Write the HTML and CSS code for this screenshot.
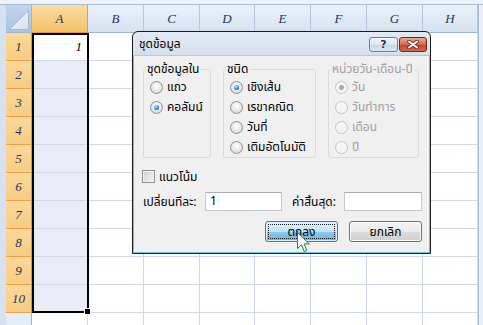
FILE: index.html
```html
<!DOCTYPE html>
<html lang="th">
<head>
    <meta charset="UTF-8">
    <title>ชุดข้อมูล</title>
    <link rel="stylesheet" href="styles.css">
</head>
<body>
    <div class="topbar"></div>
    <div class="workspace">
        <div class="edge-left"></div>
        <div class="sheet">
            <div class="corner">
                <svg width="26" height="28" viewBox="0 0 26 28">
                    <defs>
                        <linearGradient id="tri" x1="0" y1="0" x2="1" y2="1">
                            <stop offset="0" stop-color="#f7f9fc"/>
                            <stop offset="1" stop-color="#d6e0ee"/>
                        </linearGradient>
                    </defs>
                    <polygon points="3.5,24.5 22.5,5.5 22.5,24.5" fill="url(#tri)" stroke="#a7b9d0"/>
                </svg>
            </div>
            <div class="ch on">A</div><div class="ch">B</div><div class="ch">C</div><div class="ch">D</div><div class="ch">E</div><div class="ch">F</div><div class="ch">G</div><div class="ch">H</div>

            <div class="rh on">1</div><div class="c num">1</div><div class="c"></div><div class="c"></div><div class="c"></div><div class="c"></div><div class="c"></div><div class="c"></div><div class="c"></div>
            <div class="rh on">2</div><div class="c sel"></div><div class="c"></div><div class="c"></div><div class="c"></div><div class="c"></div><div class="c"></div><div class="c"></div><div class="c"></div>
            <div class="rh on">3</div><div class="c sel"></div><div class="c"></div><div class="c"></div><div class="c"></div><div class="c"></div><div class="c"></div><div class="c"></div><div class="c"></div>
            <div class="rh on">4</div><div class="c sel"></div><div class="c"></div><div class="c"></div><div class="c"></div><div class="c"></div><div class="c"></div><div class="c"></div><div class="c"></div>
            <div class="rh on">5</div><div class="c sel"></div><div class="c"></div><div class="c"></div><div class="c"></div><div class="c"></div><div class="c"></div><div class="c"></div><div class="c"></div>
            <div class="rh on">6</div><div class="c sel"></div><div class="c"></div><div class="c"></div><div class="c"></div><div class="c"></div><div class="c"></div><div class="c"></div><div class="c"></div>
            <div class="rh on">7</div><div class="c sel"></div><div class="c"></div><div class="c"></div><div class="c"></div><div class="c"></div><div class="c"></div><div class="c"></div><div class="c"></div>
            <div class="rh on">8</div><div class="c sel"></div><div class="c"></div><div class="c"></div><div class="c"></div><div class="c"></div><div class="c"></div><div class="c"></div><div class="c"></div>
            <div class="rh on">9</div><div class="c sel"></div><div class="c"></div><div class="c"></div><div class="c"></div><div class="c"></div><div class="c"></div><div class="c"></div><div class="c"></div>
            <div class="rh on">10</div><div class="c sel"></div><div class="c"></div><div class="c"></div><div class="c"></div><div class="c"></div><div class="c"></div><div class="c"></div><div class="c"></div>
            <div class="rh last">11</div><div class="c"></div><div class="c"></div><div class="c"></div><div class="c"></div><div class="c"></div><div class="c"></div><div class="c"></div><div class="c"></div>
        </div>
        <div class="edge-right"></div>
    </div>

    <!-- selected range A1:A10 -->
    <div class="selection"></div>

    <div class="dialog">
        <div class="titlebar">
            <span class="title">ชุดข้อมูล</span>
            <div class="caption">
                <span class="cap-help">?</span>
                <span class="cap-close">
                    <svg width="12" height="9" viewBox="0 0 12 9">
                        <path d="M2 1.5 L10 7.5 M10 1.5 L2 7.5" stroke="#6b2a1c" stroke-width="3.6" stroke-linecap="round"/>
                        <path d="M2 1.5 L10 7.5 M10 1.5 L2 7.5" stroke="#ffffff" stroke-width="2" stroke-linecap="round"/>
                    </svg>
                </span>
            </div>
        </div>
        <div class="client">
            <div class="groups">
                <fieldset class="group g1">
                    <legend>ชุดข้อมูลใน</legend>
                    <div class="opt"><span class="radio"></span>แถว</div>
                    <div class="opt"><span class="radio on"></span>คอลัมน์</div>
                </fieldset>
                <fieldset class="group g2">
                    <legend>ชนิด</legend>
                    <div class="opt"><span class="radio on"></span>เชิงเส้น</div>
                    <div class="opt"><span class="radio"></span>เรขาคณิต</div>
                    <div class="opt"><span class="radio"></span>วันที่</div>
                    <div class="opt"><span class="radio"></span>เติมอัตโนมัติ</div>
                </fieldset>
                <fieldset class="group g3 disabled">
                    <legend>หน่วยวัน-เดือน-ปี</legend>
                    <div class="opt"><span class="radio on"></span>วัน</div>
                    <div class="opt"><span class="radio"></span>วันทำการ</div>
                    <div class="opt"><span class="radio"></span>เดือน</div>
                    <div class="opt"><span class="radio"></span>ปี</div>
                </fieldset>
            </div>

            <div class="check-row"><span class="check"></span>แนวโน้ม</div>

            <div class="step-row">
                <span class="step-label">เปลี่ยนทีละ:</span>
                <span class="field">1</span>
                <span class="step-label end">ค่าสิ้นสุด:</span>
                <span class="field wide"></span>
            </div>

            <div class="buttons">
                <span class="btn default"><span class="focus">ตกลง</span></span>
                <span class="btn">ยกเลิก</span>
            </div>
        </div>
    </div>

    <svg class="pointer" width="13" height="21" viewBox="0 0 13 21">
        <path d="M0.5 0.5 L0.5 16.5 L4.5 12.8 L7.3 19.6 L9.8 18.5 L7.1 11.9 L12.2 11.9 Z" fill="#ffffff" stroke="#1f8a2f" stroke-width="1" stroke-linejoin="round"/>
    </svg>
</body>
</html>
```

FILE: styles.css
```css
body {
    margin: 0;
    width: 483px;
    height: 325px;
    overflow: hidden;
    position: relative;
    background-color: #e4ecf6;
    font-family: Tahoma, "Noto Sans Thai", "Noto Sans", "DejaVu Sans", sans-serif;
    font-size: 12px;
    color: #000;
}

.topbar {
    height: 4px;
    background-color: #eef3fa;
    border-bottom: 1px solid #a3bbd7;
}

.workspace {
    display: flex;
}

.edge-left {
    width: 6px;
    background-color: #d6e2f1;
}

.edge-right {
    flex: 1;
    background-color: #e9eef6;
    border-left: 1px solid #a9bdd6;
}

/* sheet grid: row header + columns A..H */
.sheet {
    display: grid;
    grid-template-columns: 26px 56px 56px 56px 55px 56px 56px 56px 55px;
    grid-auto-rows: 28px;
}

.corner {
    background: linear-gradient(#c3d5ec, #aac3e3);
    border-right: 1px solid #9eb6ce;
    border-bottom: 1px solid #9eb6ce;
    box-sizing: border-box;
}

.corner svg {
    display: block;
}

.ch,
.rh {
    box-sizing: border-box;
    font-family: "Liberation Serif", serif;
    font-style: italic;
    font-size: 13px;
    color: #22375a;
    text-align: center;
    line-height: 27px;
}

.ch {
    background: linear-gradient(#eaf1fa, #d6e2f1);
    border-right: 1px solid #b4c7dd;
    border-bottom: 1px solid #9eb6ce;
}

.ch.on {
    background: linear-gradient(#fbdca3, #f3c266);
    border-right-color: #d9a448;
    border-bottom-color: #e29a3c;
}

.rh {
    background: linear-gradient(#e8eff8, #dbe5f2);
    border-right: 1px solid #9eb6ce;
    border-bottom: 1px solid #b4c7dd;
}

.rh.last {
    line-height: 22px;
    padding-top: 6px;
}

.rh.on {
    background: linear-gradient(#fbd89a, #f8cc82);
    border-right-color: #e29336;
    border-bottom-color: #efa04a;
}

.c {
    box-sizing: border-box;
    background-color: #fff;
    border-right: 1px solid #d0d7e5;
    border-bottom: 1px solid #d0d7e5;
}

.c.sel {
    background-color: #e9ecf6;
}

.c.num {
    font-family: "Liberation Serif", serif;
    font-style: italic;
    font-size: 13px;
    text-align: right;
    padding-right: 5px;
    line-height: 27px;
}

.selection {
    position: absolute;
    left: 32px;
    top: 33px;
    width: 57px;
    height: 280px;
    box-sizing: border-box;
    border: 2px solid #000;
}

.selection::after {
    content: '';
    position: absolute;
    right: -4px;
    bottom: -4px;
    width: 5px;
    height: 5px;
    background-color: #000;
    border: 1px solid #fff;
}

/* dialog window */
.dialog {
    position: absolute;
    left: 132px;
    top: 31px;
    width: 299px;
    height: 223px;
    box-sizing: border-box;
    border: 1px solid #1b1b1b;
    border-radius: 6px 6px 0 0;
    background: linear-gradient(#e2eaf4, #d5dfec 24px);
    display: flex;
    flex-direction: column;
}

.titlebar {
    height: 23px;
    display: flex;
    align-items: center;
    padding: 0 3px 0 6px;
}

.caption {
    margin-left: auto;
    display: flex;
    gap: 1px;
    align-self: flex-start;
    margin-top: 5px;
}

.cap-help,
.cap-close {
    height: 15px;
    box-sizing: border-box;
    border-radius: 3px;
    display: flex;
    align-items: center;
    justify-content: center;
}

.cap-help {
    width: 29px;
    border: 1px solid #6f8097;
    background: linear-gradient(#f2f6fb, #dbe5f1 50%, #c6d5e8 50%, #d9e5f3);
    font-family: "DejaVu Sans", sans-serif;
    font-weight: bold;
    font-size: 11px;
    color: #23344f;
    text-shadow: 0 0 2px #fff;
}

.cap-close {
    width: 28px;
    border: 1px solid #6d2b1e;
    background: linear-gradient(#eaa997, #d7664e 50%, #c5402a 50%, #d36a50);
}

.client {
    flex: 1;
    background-color: #f0f0f0;
    border: 1px solid #5ec7ee;
    border-top-color: #b7c8dc;
    padding: 5px 7px 0 9px;
}

.groups {
    display: flex;
    gap: 12px;
}

.group {
    margin: 0;
    padding: 0 0 0 6px;
    height: 97px;
    box-sizing: border-box;
    border: 1px solid #d3dce4;
    border-radius: 3px;
}

.group legend {
    padding: 0 2px;
    margin-left: -5px;
    line-height: 16px;
}

.g1 {
    width: 68px;
}

.g2 {
    width: 93px;
}

.g3 {
    width: 91px;
}

.opt {
    display: flex;
    align-items: center;
    gap: 4px;
    height: 20px;
    white-space: nowrap;
}

.radio {
    width: 13px;
    height: 13px;
    flex: none;
    box-sizing: border-box;
    border-radius: 50%;
    border: 1px solid #8e9194;
    background: radial-gradient(circle at 50% 40%, #ffffff 0, #eeeeee 40%, #cdcdcd 100%);
    display: grid;
    place-items: center;
}

.radio.on::after {
    content: '';
    width: 5px;
    height: 5px;
    border-radius: 50%;
    background: radial-gradient(circle at 40% 35%, #c6ecff, #2a7bd0 60%, #14498c);
}

.disabled {
    color: #a0a0a0;
}

.disabled .radio {
    border-color: #c4c4c4;
    background: #f4f4f4;
}

.disabled .radio.on::after {
    background: #a9a9a9;
}

.check-row {
    display: flex;
    align-items: center;
    gap: 4px;
    margin-top: 12px;
    margin-left: -1px;
    height: 13px;
}

.check {
    width: 13px;
    height: 13px;
    box-sizing: border-box;
    border: 1px solid #8f8f8f;
    background: linear-gradient(135deg, #cdcdcd, #f6f6f6);
    box-shadow: inset 0 0 0 1px #f2f2f2;
}

.step-row {
    display: flex;
    align-items: center;
    margin-top: 9px;
}

.step-label {
    width: 62px;
    white-space: nowrap;
}

.step-label.end {
    margin-left: 10px;
    width: 52px;
}

.field {
    box-sizing: border-box;
    width: 77px;
    height: 19px;
    background-color: #fff;
    border: 1px solid #c5c8cd;
    border-top-color: #a9acb2;
    padding-left: 4px;
    line-height: 17px;
}

.field.wide {
    width: 78px;
}

.buttons {
    display: flex;
    justify-content: flex-end;
    gap: 11px;
    margin-top: 10px;
}

.btn {
    width: 73px;
    height: 21px;
    box-sizing: border-box;
    border: 1px solid #707070;
    border-radius: 3px;
    background: linear-gradient(#f3f3f3, #ebebeb 50%, #dddddd 50%, #cfcfcf);
    box-shadow: inset 0 0 0 1px #fbfbfb;
    display: flex;
    align-items: center;
    justify-content: center;
}

.btn.default {
    border-color: #3c7fb1;
    background: linear-gradient(#e3f4fd, #bfe4f8 50%, #90cdee 50%, #62b1df);
    box-shadow: inset 0 0 0 1px #d8effb;
    padding: 2px;
}

.btn .focus {
    align-self: stretch;
    flex: 1;
    display: flex;
    align-items: center;
    justify-content: center;
    border: 1px dotted #1a1a1a;
}

.pointer {
    position: absolute;
    left: 297px;
    top: 232px;
}
```
